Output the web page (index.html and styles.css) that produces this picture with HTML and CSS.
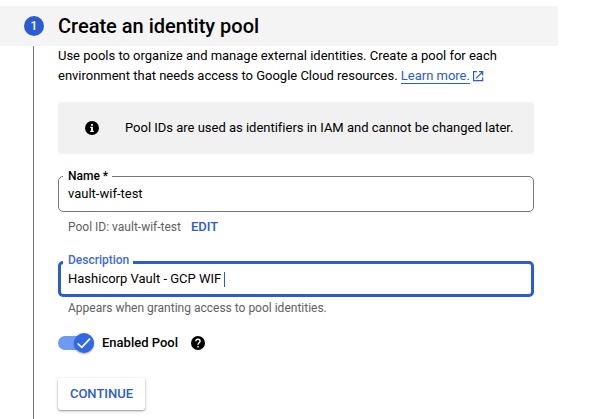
FILE: index.html
```html
<!DOCTYPE html>
<html lang="en">
<head>
<meta charset="utf-8">
<title>Create an identity pool</title>
<link rel="stylesheet" href="styles.css">
</head>
<body>
<main class="step">
  <header class="step-header">
    <span class="step-number">1</span>
    <h1 class="step-title">Create an identity pool</h1>
  </header>
  <div class="step-body">
    <p class="intro">Use pools to organize and manage external identities. Create a pool for each<br>environment that needs access to Google Cloud resources. <a class="learn" href="#">Learn more.</a><svg class="external" viewBox="0 0 12 12"><path d="M4.8 1.6H1.6V10.7H10.7V7.3M6.9 1.6H10.7V5.4M10.5 1.8L4 8.3" fill="none" stroke="currentColor" stroke-width="1.2"/></svg></p>

    <div class="notice">
      <svg class="info" viewBox="0 0 14 14"><circle cx="7" cy="7" r="7"/><path d="M6.1 3h1.8v1.7H6.1zM5.2 5.7h2.7v4h.9v1.2H5.2V9.7h.9V6.9h-.9z" fill="#fff"/></svg>
      <span class="notice-text">Pool IDs are used as identifiers in IAM and cannot be changed later.</span>
    </div>

    <div class="field">
      <label class="field-label name-label">Name *</label>
      <span class="name-value">vault-wif-test</span>
    </div>
    <div class="hint"><span class="pool-id">Pool ID: vault-wif-test</span><a class="edit" href="#">EDIT</a></div>

    <div class="field field-focused">
      <label class="field-label description-label">Description</label>
      <span class="description-value">Hashicorp Vault - GCP WIF</span><span class="caret"></span>
    </div>
    <div class="hint description-hint">Appears when granting access to pool identities.</div>

    <div class="toggle-row">
      <span class="toggle"><span class="knob"><svg class="check" viewBox="0 0 20 20"><path d="M3.6 10.5L7.8 14.4L16 5.7" fill="none" stroke="#fff" stroke-width="1.7"/></svg></span></span>
      <span class="toggle-label">Enabled Pool</span>
      <svg class="help" viewBox="0 0 14 14"><circle cx="7" cy="7" r="7"/><path d="M4.9 5.2C4.9 2.5 9.1 2.5 9.1 5.2C9.1 6.7 7 6.9 7 8.8M7 10v1.5" fill="none" stroke="#fff" stroke-width="1.4"/></svg>
    </div>

    <button class="continue">CONTINUE</button>
  </div>
</main>
</body>
</html>
```

FILE: styles.css
```css
* {
  box-sizing: border-box;
}

body {
  margin: 0;
  background: #fff;
  color: #000;
  font: 13px/20px Roboto, sans-serif;
  overflow: hidden;
}

a {
  color: #2c5bd2;
  text-decoration: none;
}

.step {
  width: 558px;
  height: 419px;
  padding-top: 6px;
  display: flex;
  flex-direction: column;
}

.step-header {
  height: 40px;
  flex: none;
  display: flex;
  align-items: center;
  gap: 14px;
  padding-left: 24px;
  background: #f4f4f4;
}

.step-number {
  width: 20px;
  height: 20px;
  border-radius: 50%;
  background: #2c5bd2;
  color: #fff;
  font-size: 12px;
  font-weight: 500;
  text-align: center;
}

.step-title {
  margin: 0;
  font-size: 20px;
  font-weight: 500;
}

.step-body {
  flex: 1;
  margin-left: 33px;
  padding: 0 24px;
  border-left: 1px solid #757575;
}

.intro {
  margin: 0;
  white-space: nowrap;
  letter-spacing: -0.01px;
}

.learn {
  display: inline-block;
  height: 18px;
  border-bottom: 1px solid #2c5bd2;
  vertical-align: top;
}

.external {
  width: 12px;
  height: 12px;
  margin-left: 2px;
  color: #2c5bd2;
  vertical-align: -2px;
}

.notice {
  height: 52px;
  margin-top: 16px;
  padding-left: 27px;
  display: flex;
  align-items: center;
  gap: 26px;
  border-radius: 4px;
  background: #f1f1f1;
  white-space: nowrap;
  letter-spacing: -0.01px;
}

.info,
.help {
  width: 14px;
  height: 14px;
  flex: none;
}

.field {
  position: relative;
  height: 36px;
  margin-top: 22px;
  padding-left: 9px;
  display: flex;
  align-items: center;
  border: 1px solid #74777c;
  border-radius: 5px;
}

.field-focused {
  margin-top: 24px;
  padding-left: 7px;
  border: 3px solid #2c5bd2;
}

.field-label {
  position: absolute;
  top: -9px;
  left: 4px;
  padding: 0 4px 0 5px;
  background: #fff;
  font-size: 12px;
  font-weight: 500;
  line-height: 16px;
}

.description-label {
  top: -12px;
  left: 2px;
  color: #3f6ad8;
}

.caret {
  width: 1px;
  height: 15px;
  margin-left: 3px;
  background: #2c5bd2;
}

.hint {
  height: 25px;
  padding: 5px 10px 0;
  display: flex;
  gap: 10px;
  color: #616161;
  font-size: 12px;
}

.edit {
  font-size: 13px;
  font-weight: 500;
}

.description-hint {
  padding-top: 1px;
}

.toggle-row {
  height: 20px;
  margin-top: 11px;
  display: flex;
  align-items: center;
}

.toggle {
  width: 36px;
  height: 14px;
  display: flex;
  align-items: center;
  justify-content: flex-end;
  border-radius: 7px;
  background: #6d9bf3;
}

.knob {
  width: 20px;
  height: 20px;
  border-radius: 50%;
  background: #3069e2;
  box-shadow: 0 1px 2px rgba(0, 0, 0, 0.35);
}

.check {
  display: block;
  width: 20px;
  height: 20px;
}

.toggle-label {
  margin: 0 13px 0 8px;
  font-weight: 500;
}

.continue {
  width: 87px;
  height: 32px;
  margin-top: 25px;
  padding: 0;
  border: 0;
  border-radius: 3px;
  background: #fff;
  color: #2c5bd2;
  font: 500 13px/32px Roboto, sans-serif;
  box-shadow: 0 1px 2px rgba(0, 0, 0, 0.35), 0 1px 4px rgba(0, 0, 0, 0.12);
}
```
